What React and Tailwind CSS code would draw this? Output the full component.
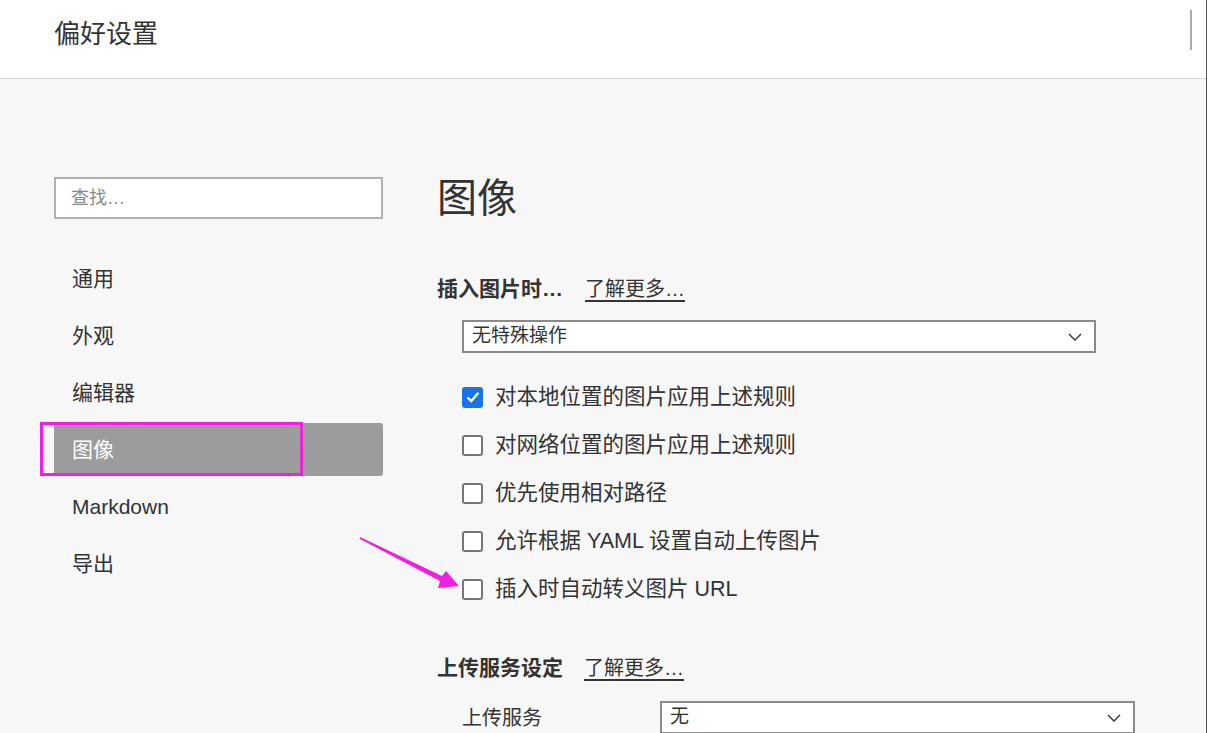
const font = { fontFamily: '"Liberation Sans", "Noto Sans CJK SC", sans-serif' };

const navItems = ['通用', '外观', '编辑器', '图像', 'Markdown', '导出'];

const options = [
    { label: '对本地位置的图片应用上述规则', checked: true },
    { label: '对网络位置的图片应用上述规则', checked: false },
    { label: '优先使用相对路径', checked: false },
    { label: '允许根据 YAML 设置自动上传图片', checked: false },
    { label: '插入时自动转义图片 URL', checked: false },
];

const Chevron = () => (
    <svg width="14" height="8" viewBox="0 0 14 8" fill="none">
        <polyline points="1,1 7,7 13,1" stroke="#333" strokeWidth="1.4" />
    </svg>
);

const Checkbox = ({ checked }) =>
    checked ? (
        <span className="w-[21px] h-[21px] rounded-[3px] bg-[#1a73e8] flex items-center justify-center shrink-0">
            <svg width="14" height="12" viewBox="0 0 14 12" fill="none">
                <polyline points="1.5,6.5 5.2,10 12.5,1.8" stroke="#fff" strokeWidth="2.4" />
            </svg>
        </span>
    ) : (
        <span className="w-[21px] h-[21px] rounded-[3px] bg-white border-2 border-[#767676] shrink-0" />
    );

const SelectBox = ({ value, className }) => (
    <div className={`h-[33px] bg-white border-2 border-[#8a8a8a] flex items-center justify-between pl-2 pr-3 text-[19px] text-[#333] ${className}`}>
        <span>{value}</span>
        <Chevron />
    </div>
);

export default function App() {
    return (
        <div className="relative w-[1207px] h-[733px] overflow-hidden bg-[#f7f7f7] text-[#333] border-r border-[#555]" style={font}>
            {/* 顶部标题栏 */}
            <div className="h-[79px] bg-white border-b border-[#d6d6d6] flex items-center justify-between pl-[54px] pr-[14px]">
                <h1 className="text-[26px] leading-none -mt-[10px]">偏好设置</h1>
                <div className="w-[2px] h-[40px] bg-[#aaa] self-start mt-[10px]" />
            </div>

            <div className="flex">
                {/* 左侧导航 */}
                <div className="w-[437px] pl-[54px] pr-[54px] pt-[98px] shrink-0">
                    <div className="h-[42px] bg-white border-2 border-[#b0b0b0] flex items-center pl-[15px] text-[18px] text-[#8a8a8a]">
                        查找…
                    </div>
                    <div className="mt-[33px] flex flex-col gap-[4px]">
                        {navItems.map((item) => {
                            const active = item === '图像';
                            return (
                                <div
                                    key={item}
                                    className={`relative h-[53px] flex items-center pl-[18px] text-[21px] rounded-[3px] ${active ? 'bg-[#9c9c9c] text-white' : ''}`}
                                >
                                    {item}
                                    {active && (
                                        <div className="absolute left-[-14px] top-[-1px] w-[263px] h-[54px] border-[3px] border-[#f020e0]" />
                                    )}
                                </div>
                            );
                        })}
                    </div>
                </div>

                {/* 右侧内容 */}
                <div className="flex-1 pt-[95px] pr-[72px]">
                    <h2 className="text-[40px] leading-[48px]">图像</h2>

                    <div className="mt-[53px] flex items-center gap-[22px] h-[28px]">
                        <span className="text-[21px] font-bold">插入图片时…</span>
                        <span className="text-[20px] underline underline-offset-4">了解更多…</span>
                    </div>

                    <SelectBox value="无特殊操作" className="ml-[25px] mt-[17px] w-[634px]" />

                    <div className="mt-[20px] ml-[25px] flex flex-col">
                        {options.map((o) => (
                            <div key={o.label} className="h-[48px] flex items-center gap-[12px] text-[21.5px]">
                                <Checkbox checked={o.checked} />
                                <span>{o.label}</span>
                            </div>
                        ))}
                    </div>

                    <div className="mt-[41px] flex items-center gap-[21px] h-[28px]">
                        <span className="text-[21px] font-bold">上传服务设定</span>
                        <span className="text-[20px] underline underline-offset-4">了解更多…</span>
                    </div>

                    <div className="mt-[19px] ml-[25px] flex items-center">
                        <span className="w-[198px] text-[20px]">上传服务</span>
                        <SelectBox value="无" className="w-[475px]" />
                    </div>
                </div>
            </div>

            {/* 标注箭头 */}
            <svg className="absolute left-0 top-0 pointer-events-none" width="1207" height="733">
                <polygon
                    points="360,537 442,576 446,571 459,586 438,588 440,581 360,539"
                    fill="#f020e0"
                />
            </svg>
        </div>
    );
}
